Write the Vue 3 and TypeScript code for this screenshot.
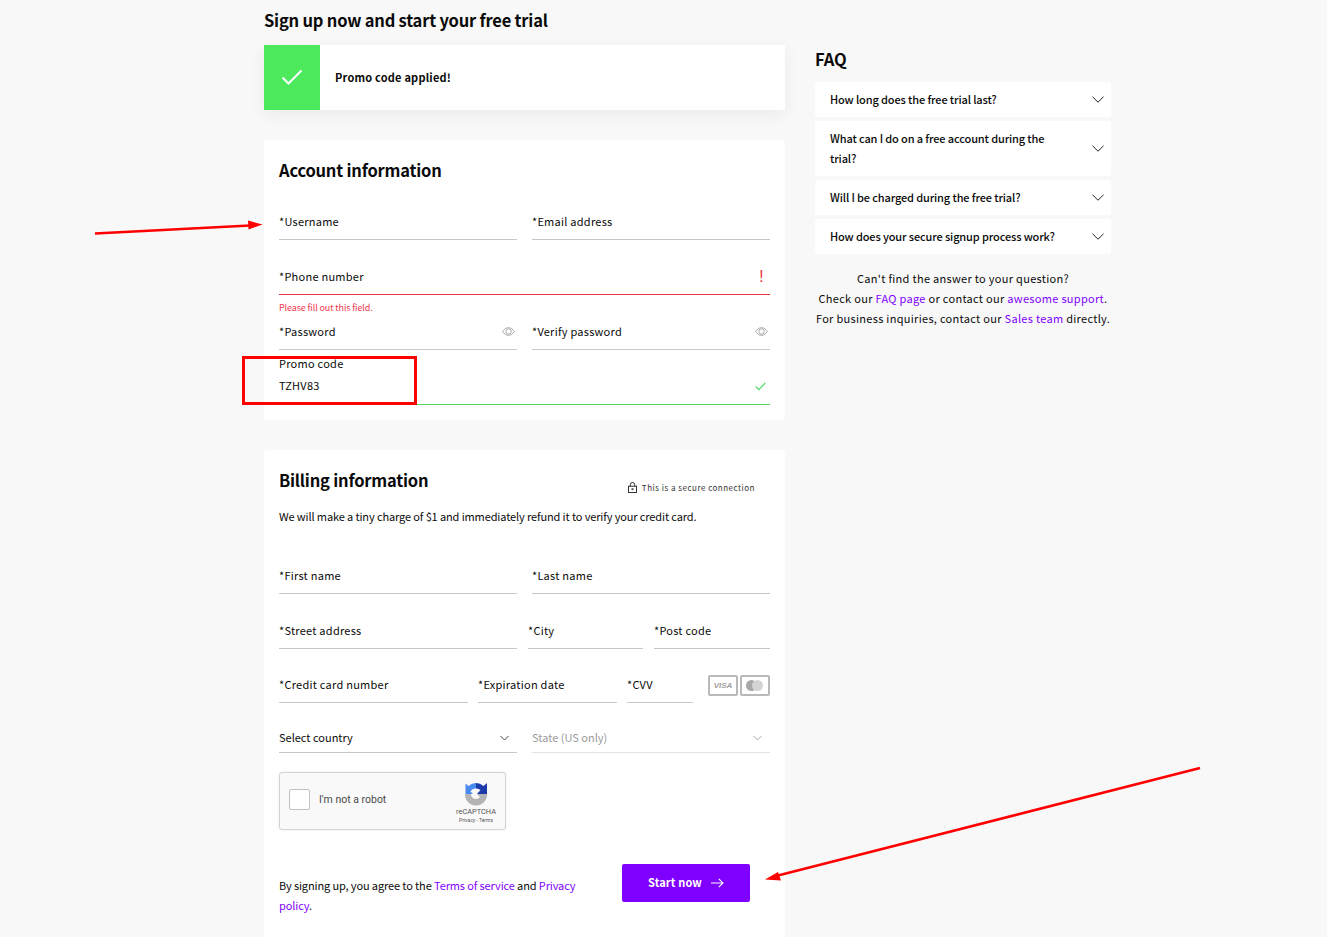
<script setup lang="ts">
const faqs: string[] = [
  'How long does the free trial last?',
  'What can I do on a free account during the trial?',
  'Will I be charged during the free trial?',
  'How does your secure signup process work?',
]
</script>

<template>
  <div class="page">
    <main class="left">
      <h1 class="title">Sign up now and start your free trial</h1>
      <div class="banner">
        <div class="banner-icon">
          <svg width="22" height="16" viewBox="0 0 22 16"><path d="M1.5 8.5 L7.5 14.5 L20.5 1.5" fill="none" stroke="#fff" stroke-width="2" /></svg>
        </div>
        <span class="banner-text">Promo code applied!</span>
      </div>

      <section class="card account">
        <h2 class="card-title">Account information</h2>
        <div class="rows">
          <div class="row">
            <div class="field grow"><span>*Username</span></div>
            <div class="field grow"><span>*Email address</span></div>
          </div>
          <div class="row">
            <div class="field grow error">
              <span>*Phone number</span>
              <i class="bang">!</i>
              <em class="err-msg">Please fill out this field.</em>
            </div>
          </div>
          <div class="row">
            <div class="field grow">
              <span>*Password</span>
              <svg class="eye" width="13" height="9" viewBox="0 0 13 9"><path d="M.6 4.5C2.2 2 4.2.7 6.5.7s4.3 1.3 5.900 3.800C10.800 7 8.800 8.300 6.500 8.300S2.200 7 .6 4.500Z" fill="none" stroke="#a8a8a8" /><circle cx="6.500" cy="4.500" r="2.700" fill="none" stroke="#a8a8a8" /></svg>
            </div>
            <div class="field grow">
              <span>*Verify password</span>
              <svg class="eye" width="13" height="9" viewBox="0 0 13 9"><path d="M.6 4.5C2.2 2 4.2.7 6.5.7s4.3 1.3 5.900 3.800C10.800 7 8.800 8.300 6.500 8.300S2.200 7 .6 4.500Z" fill="none" stroke="#a8a8a8" /><circle cx="6.500" cy="4.500" r="2.700" fill="none" stroke="#a8a8a8" /></svg>
            </div>
          </div>
          <div class="row">
            <div class="field grow valid">
              <label class="float">Promo code</label>
              <span>TZHV83</span>
              <svg class="tick" width="11" height="9" viewBox="0 0 11 9"><path d="M.7 4.500 L3.900 7.700 L10.300 .8" fill="none" stroke="#4cd964" stroke-width="1.200" /></svg>
            </div>
          </div>
        </div>
      </section>

      <section class="card billing">
        <div class="billing-head">
          <h2 class="card-title">Billing information</h2>
          <div class="secure">
            <svg width="9" height="11" viewBox="0 0 9 11"><path d="M2.300 4.500V2.700a2.200 2.200 0 0 1 4.400 0V4.500" fill="none" stroke="#333" /><rect x=".5" y="4.200" width="8" height="6.300" fill="none" stroke="#333" /><rect x="3.500" y="6.200" width="2" height="2" fill="#555" /></svg>
            <span>This is a secure connection</span>
          </div>
        </div>
        <p class="note">We will make a tiny charge of $1 and immediately refund it to verify your credit card.</p>
        <div class="rows">
          <div class="row">
            <div class="field grow"><span>*First name</span></div>
            <div class="field grow"><span>*Last name</span></div>
          </div>
          <div class="row address">
            <div class="field street"><span>*Street address</span></div>
            <div class="field city"><span>*City</span></div>
            <div class="field post"><span>*Post code</span></div>
          </div>
          <div class="row payment">
            <div class="field ccn"><span>*Credit card number</span></div>
            <div class="field exp"><span>*Expiration date</span></div>
            <div class="field cvv"><span>*CVV</span></div>
            <div class="cards">
              <div class="cc"><b>VISA</b></div>
              <div class="cc"><i class="dot d1"></i><i class="dot d2"></i></div>
            </div>
          </div>
          <div class="row selects">
            <div class="field grow select">
              <span>Select country</span>
              <svg class="sel-chev" width="9" height="6" viewBox="0 0 9 6"><path d="M.5 1 L4.500 5 L8.500 1" fill="none" stroke="#444" /></svg>
            </div>
            <div class="field grow select disabled">
              <span>State (US only)</span>
              <svg class="sel-chev" width="9" height="6" viewBox="0 0 9 6"><path d="M.5 1 L4.500 5 L8.500 1" fill="none" stroke="#aaa" /></svg>
            </div>
          </div>
        </div>

        <div class="captcha">
          <div class="check"></div>
          <span class="robot">I'm not a robot</span>
          <div class="rc">
            <svg width="24" height="24" viewBox="0 0 24 24">
              <path d="M1 12 H7 A5 5 0 0 0 16 15 L13 12 H23 V13 A11 11 0 0 1 1 12Z" fill="#b4b4b4" />
              <path d="M12 1 A11 11 0 0 0 4.500 4 L1.500 1.500 V12 H9 L6.500 9.500 A6 6 0 0 1 12 6.500Z" fill="#4a8af0" />
              <path d="M12 1 A11 11 0 0 1 19.500 4 L23 1 V12 H13 L16.500 8 A6 6 0 0 0 12 6.500Z" fill="#1c3aa9" />
            </svg>
            <span class="rc-name">reCAPTCHA</span>
            <span class="rc-links">Privacy - Terms</span>
          </div>
        </div>

        <div class="actions">
          <p class="agree">By signing up, you agree to the <a>Terms of service</a> and <a>Privacy policy</a>.</p>
          <button class="start" type="button">
            <span>Start now</span>
            <svg width="13" height="10" viewBox="0 0 13 10"><path d="M0 5H12M7.800 .8 L12 5 L7.800 9.200" fill="none" stroke="#fff" stroke-width="1.100" /></svg>
          </button>
        </div>
      </section>
    </main>

    <aside class="right">
      <h2 class="faq-title">FAQ</h2>
      <div class="faq-list">
        <div v-for="q in faqs" :key="q" class="faq">
          <span>{{ q }}</span>
          <svg width="12" height="7" viewBox="0 0 12 7"><path d="M.5 .8 L6 6.200 L11.500 .8" fill="none" stroke="#222" stroke-width="1" /></svg>
        </div>
      </div>
      <p class="help">
        Can't find the answer to your question?<br />
        Check our <a>FAQ page</a> or contact our <a>awesome support</a>.<br />
        For business inquiries, contact our <a>Sales team</a> directly.
      </p>
    </aside>

    <svg class="marks" width="1327" height="937" viewBox="0 0 1327 937">
      <path d="M95 233.500 L250 225.500" stroke="#ff0000" stroke-width="2.600" fill="none" />
      <path d="M262.500 224.500 L248 220.500 L248.500 229.500Z" fill="#ff0000" />
      <path d="M1200 768 L776 876" stroke="#ff0000" stroke-width="2.600" fill="none" />
      <path d="M765 879.500 L778 872 L781 880.500Z" fill="#ff0000" />
      <rect x="243.500" y="357.500" width="172" height="46" fill="none" stroke="#ff0000" stroke-width="3" />
    </svg>
  </div>
</template>

<style>
html, body { margin: 0; background: #f8f8f8; }
</style>

<style scoped>
.page {
  position: relative;
  display: flex;
  align-items: flex-start;
  gap: 30px;
  height: 937px;
  overflow: hidden;
  padding-left: 264px;
  background: #f8f8f8;
  color: #0a0a0a;
  font-family: "Noto Sans CJK JP", "Noto Sans", sans-serif;
  font-size: 11px;
  box-sizing: border-box;
}
.left { width: 521px; flex: none; }
.right { width: 296px; flex: none; padding-top: 47px; }
.title { margin: 0; font-size: 16.5px; letter-spacing: -.2px; line-height: 24px; height: 45px; padding-top: 8px; box-sizing: border-box; font-weight: 700; }
.banner { display: flex; align-items: center; height: 65px; background: #fff; box-shadow: 0 4px 16px rgba(0, 0, 0, .06); }
.banner-icon { width: 56px; height: 100%; display: flex; align-items: center; justify-content: center; background: #4ce95c; }
.banner-icon svg { margin-top: -2px; }
.banner-text { margin-left: 15px; margin-top: -1px; font-size: 11px; font-weight: 700; letter-spacing: .2px; }
.card { background: #fff; border-radius: 4px; padding: 0 15px; margin-top: 30px; box-sizing: border-box; }
.account { height: 280px; }
.card-title { margin: 0; font-size: 16.5px; letter-spacing: -.2px; line-height: 24px; font-weight: 700; padding-top: 18px; height: 45px; box-sizing: border-box; }
.billing { height: 500px; }
.billing-head { display: flex; justify-content: space-between; height: 45px; }
.secure { display: flex; align-items: center; gap: 5px; margin: 23px 15px 0 0; height: 28px; font-size: 8px; letter-spacing: .5px; color: #333; }
.note { margin: 11px 0 0; font-size: 11px; letter-spacing: -.12px; line-height: 20px; height: 33px; }
.row { display: flex; gap: 15px; }
.field {
  position: relative;
  display: flex;
  align-items: flex-end;
  height: 55px;
  padding-bottom: 8px;
  box-sizing: border-box;
  border-bottom: 1px solid #c8c8c8;
  line-height: 20px;
  font-size: 11px;
  letter-spacing: .25px;
}
.grow { flex: 1 1 0; }
.error { border-bottom-color: #e8303f; }
.valid { border-bottom-color: #53dc62; padding-bottom: 9px; }
.bang { position: absolute; right: 6px; bottom: 7px; color: #f03a4a; font-family: "Liberation Sans", sans-serif; font-style: normal; font-size: 17px; }
.err-msg { position: absolute; left: 0; top: 100%; margin-top: 6px; font-style: normal; font-size: 9px; line-height: 16px; letter-spacing: -.12px; color: #f0384f; }
.eye { position: absolute; right: 2px; bottom: 13px; }
.tick { position: absolute; right: 4px; bottom: 13px; }
.float { position: absolute; left: 0; top: 3px; }
.street { width: 238px; }
.city { width: 115px; }
.post { width: 116px; }
.address { gap: 11px; }
.address { height: 55px; }
.payment { height: 54px; gap: 10px; }
.payment .field { height: 54px; }
.ccn { width: 189px; }
.exp { width: 139px; }
.cvv { width: 66px; }
.cards { display: flex; gap: 2px; margin: 26px 0 0 5px; height: 21px; }
.cc { position: relative; display: flex; align-items: center; justify-content: center; width: 26px; height: 17px; border: 2px solid #b9b9b9; border-radius: 2px; background: #fff; }
.cc b { font-family: "Liberation Sans", sans-serif; font-size: 8px; font-style: italic; color: #a0a0a0; letter-spacing: 0; }
.dot { position: absolute; top: 3px; width: 11px; height: 11px; border-radius: 50%; }
.d1 { left: 4px; background: #a8a8a8; }
.d2 { left: 10px; background: #d4d4d4; }
.selects .field { height: 50px; padding-bottom: 5px; }
.select { letter-spacing: 0; }
.sel-chev { position: absolute; right: 8px; bottom: 11px; }
.disabled { color: #9a9a9a; border-bottom-color: #e2e2e2; }
.captcha {
  position: relative;
  display: flex;
  align-items: center;
  width: 227px;
  height: 58px;
  margin-top: 19px;
  padding: 0 0 3px 9px;
  box-sizing: border-box;
  background: #f9f9f9;
  border: 1px solid #d3d3d3;
  border-radius: 3px;
  box-shadow: 0 0 3px rgba(0, 0, 0, .08);
  font-family: Roboto, sans-serif;
}
.check { width: 19px; height: 19px; background: #fff; border: 1px solid #c1c1c1; border-radius: 2px; }
.robot { margin-left: 9px; font-size: 10.5px; color: #4a4a4a; }
.rc { position: absolute; left: 170px; top: 9px; width: 52px; display: flex; flex-direction: column; align-items: center; color: #555; }
.rc-name { font-size: 7.4px; line-height: 9px; margin-top: 1px; }
.rc-links { font-size: 5px; line-height: 8px; }
.actions { display: flex; justify-content: space-between; margin-top: 34px; padding-right: 20px; }
.agree { width: 300px; margin: 11px 0 0; line-height: 20px; font-size: 11px; letter-spacing: -.12px; }
a { color: #7f00ff; }
.start {
  display: flex;
  align-items: center;
  justify-content: center;
  gap: 9px;
  width: 128px;
  height: 38px;
  border: 0;
  border-radius: 2px;
  background: #7f00ff;
  color: #fff;
  font-family: inherit;
  font-size: 11px;
  font-weight: 700;
  letter-spacing: .15px;
}
.start span { margin-top: -2px; }
.faq-title { margin: 0; font-size: 16.5px; letter-spacing: -.2px; line-height: 24px; font-weight: 700; height: 35px; }
.faq-list { display: flex; flex-direction: column; gap: 4px; }
.faq {
  display: flex;
  align-items: center;
  justify-content: space-between;
  min-height: 35px;
  padding: 0 7px 0 15px;
  box-sizing: border-box;
  background: #fff;
  border-radius: 3px;
  font-size: 11px;
  letter-spacing: -.13px;
  font-weight: 500;
  line-height: 20px;
}
.faq span { max-width: 235px; padding: 7px 0 8px; }
.help { margin: 14px 0 0; text-align: center; font-size: 11px; line-height: 20px; letter-spacing: .3px; }
.marks { position: absolute; left: 0; top: 0; pointer-events: none; }
</style>
